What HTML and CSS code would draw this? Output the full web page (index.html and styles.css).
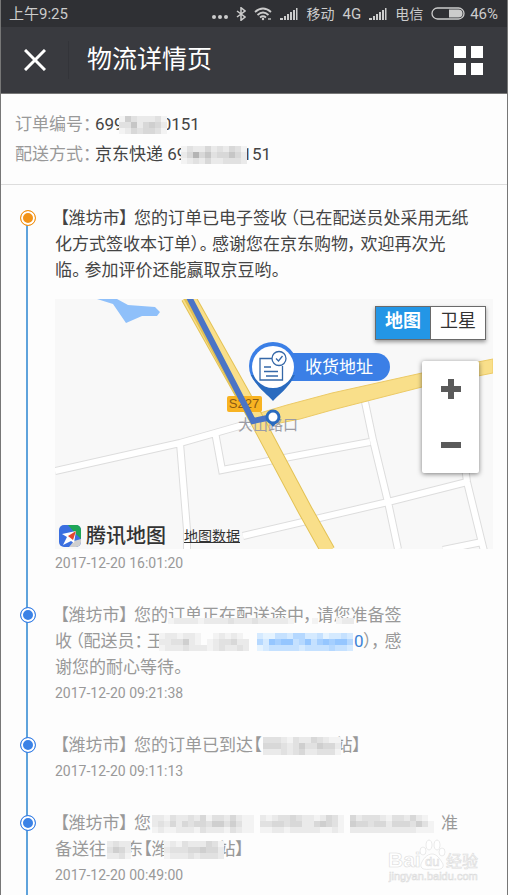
FILE: index.html
```
<!DOCTYPE html>
<html lang="zh-CN">
<head>
    <meta charset="UTF-8">
    <meta name="viewport" content="width=device-width, initial-scale=1.0">
    <title>物流详情页</title>

    <link rel="stylesheet" href="styles.css">
</head>
<body>

    <div class="statusbar">
        <span class="clock">上午9:25</span>
        <svg width="16" height="14" viewBox="0 0 16 14" fill="currentColor"><circle cx="2" cy="10" r="2"/><circle cx="8" cy="10" r="2"/><circle cx="14" cy="10" r="2"/></svg>
        <svg width="10" height="14" viewBox="0 0 10 14" fill="none" stroke="currentColor" stroke-width="1.5"><path d="M1 4l8 6-4 3.300V.7L9 4l-8 6"/></svg>
        <svg width="18" height="14" viewBox="0 0 18 14" fill="none" stroke="currentColor" stroke-width="1.800"><path d="M1 5q8-7 16 0M3.500 8q5.500-5 11 0M6 10.500q3-2.500 6 0"/><circle cx="9" cy="12" r="1.200" fill="currentColor" stroke="none"/><path d="M14 12h3" stroke-width="1.300"/></svg>
        <svg width="18" height="14" viewBox="0 0 18 14" fill="currentColor"><path d="M0 13v-2h3v2zM4 13V9h2v4zM7 13V7h2v6zM10 13V5h2v8zM13 13V3h2v10zM16 13V1h1.500v12z"/></svg>
        <span class="carrier">移动</span>
        <span>4G</span>
        <svg width="18" height="14" viewBox="0 0 18 14" fill="currentColor"><path d="M0 13v-2h3v2zM4 13V9h2v4zM7 13V7h2v6zM10 13V5h2v8zM13 13V3h2v10zM16 13V1h1.500v12z"/></svg>
        <span class="carrier">电信</span>
        <span class="battery">
            <svg width="34" height="13" viewBox="0 0 34 13"><rect x="1" y="1" width="32" height="11" rx="5.500" fill="none" stroke="currentColor" stroke-width="1.300"/><path d="M18 2.500h9.500a4 4 0 0 1 0 8H18z" fill="currentColor"/></svg>
            46%
        </span>
    </div>

    <header class="topbar">
        <button class="close" aria-label="关闭">
            <svg width="22" height="22" viewBox="0 0 22 22" stroke="#fff" stroke-width="3"><path d="M1 1l20 20M21 1L1 21"/></svg>
        </button>
        <h1>物流详情页</h1>
        <button class="menu" aria-label="菜单">
            <svg width="29" height="29" viewBox="0 0 29 29" fill="#fff"><path d="M0 0h12v12H0zM17 0h12v12H17zM0 17h12v12H0zM17 17h12v12H17z"/></svg>
        </button>
    </header>

    <main>

        <dl class="order">
            <div>
                <dt>订单编号：</dt>
                <dd>699<svg class="mosaic" data-px="15322231|33624542|12434431"></svg>0151</dd>
            </div>
            <div>
                <dt>配送方式：</dt>
                <dd>京东快递 69<svg class="mosaic" data-px="13224232431|24846344642|12324223332"></svg>151</dd>
            </div>
        </dl>

        <ol class="timeline">

            <li class="current">
                <p><span class="city">【潍坊市】</span>您的订单已电子签收<span class="open">（</span>已在配送员处采用无纸<br>化方式签收本订单）<span class="stop">。</span>感谢您在京东购物<span class="stop">，</span>欢迎再次光<br>临<span class="stop">。</span>参加评价还能赢取京豆哟。</p>

                <div class="map">
                    <svg class="scene" viewBox="0 0 438 250" preserveAspectRatio="xMidYMid slice">
                        <rect width="438" height="250" fill="#f8f8f8"/>
                        <path d="M42 0H62L73 6L100 8L105 13L102 17H87L71 24L58 5z" fill="#8fc0fa"/>

                        <!-- side streets: grey edge, then white on top -->
                        <path d="M0 172L125 144L195 124M125 144L132 231V250M160 133L167 171L245 156L315 143M310 103L318 141L333 203L343 250M188 237L333 203L412 183M409 160L412 183L427 244L430 256M388 251L427 243" fill="none" stroke="#ddd" stroke-width="8"/>
                        <path d="M0 172L125 144L195 124M125 144L132 231V250M160 133L167 171L245 156L315 143M310 103L318 141L333 203L343 250M188 237L333 203L412 183M409 160L412 183L427 244L430 256M388 251L427 243" fill="none" stroke="#fff" stroke-width="6"/>

                        <!-- main roads -->
                        <path d="M198 116L232 106L277 94L367 74L438 60V74L367 88L277 111L245 120L205 128z" fill="#f9df8a" stroke="#ecca66"/>
                        <path d="M133 -2L202 121L250 211L273 252" fill="none" stroke="#e3c255" stroke-width="15"/>
                        <path d="M133 -2L202 121L250 211L273 252" fill="none" stroke="#f9df8a" stroke-width="13"/>
                        <path d="M131 -2L196 119" fill="none" stroke="#e3c255" stroke-width="6"/>

                        <rect x="172" y="97" width="35" height="16" rx="2" fill="#f8b322"/>
                        <text x="189" y="109" class="road-no">S227</text>
                        <text x="213" y="131" class="place">大山路口</text>

                        <path d="M134 -2L198 122L217 118" fill="none" stroke="#4a74c6" stroke-width="6"/>
                        <path d="M213 122h10l-5 6z" fill="#2a6bbf"/>
                        <circle cx="218" cy="118" r="6" fill="#fff" stroke="#2a6bbf" stroke-width="3"/>

                        <!-- delivery pin -->
                        <rect x="205" y="54" width="130" height="28" rx="14" fill="#3b7fe6"/>
                        <circle cx="218" cy="67" r="24" fill="#3b7fe6"/>
                        <path d="M196 76C203 90 212 95 218 102C224 95 233 90 240 76z" fill="#2a6bbf"/>
                        <circle cx="218" cy="68" r="21" fill="#fff"/>
                        <g fill="none" stroke="#3568a8" stroke-width="1.300">
                            <path d="M217 59.500H205V81H227.500V67M209 68h7M209 72.500h14M211 77h12"/>
                            <circle cx="224" cy="59.500" r="7"/>
                            <path d="M221 59.500l2.500 2.500 4-5"/>
                        </g>
                        <text x="284" y="74" class="pin-text">收货地址</text>
                    </svg>

                    <div class="map-type">
                        <button class="on">地图</button>
                        <button>卫星</button>
                    </div>

                    <div class="map-zoom">
                        <button aria-label="放大"><svg width="20" height="20" viewBox="0 0 20 20" fill="#5a5a5a"><path d="M7 0h6v7h7v6h-7v7H7v-7H0V7h7z"/></svg></button>
                        <button aria-label="缩小"><svg width="20" height="20" viewBox="0 0 20 20" fill="#5a5a5a"><path d="M0 7h20v6H0z"/></svg></button>
                    </div>

                    <div class="map-foot">
                        <svg width="22" height="22" viewBox="0 0 22 22">
                            <rect width="22" height="22" rx="5" fill="#3b6fe0"/>
                            <path d="M9 0h8a5 5 0 0 1 5 5v9L15 7z" fill="#1fa657"/>
                            <path d="M22 14v3a5 5 0 0 1-5 5h-7l5-6z" fill="#cfcfcf"/>
                            <path d="M17 6L3 9l5 3-4 8 8-4 3 2z" fill="#fff"/>
                            <path d="M17 6l-8 5 5 4z" fill="#e2452f"/>
                        </svg>
                        <strong>腾讯地图</strong>
                        <a href="#">地图数据</a>
                    </div>
                </div>

                <time>2017-12-20 16:01:20</time>
            </li>

            <li>
                <p><span class="city">【潍坊市】</span>您的<span class="smudge">订单正在配送途中<span class="stop">，</span>请您准备<svg class="mosaic" data-px="1222212222322232222210001000122"></svg></span>签<br>收<span class="open">（</span>配送员<span class="stop">：</span>王<svg class="mosaic" data-px="12212210012121000|22335210123342200|12223222123223200"></svg><a href="tel:0"><svg class="mosaic" data-tone="blue" data-px="021133244223122320|042656634635656640|012333332333343320"></svg>0</a>）<span class="stop">，</span>感<br>谢您的耐心等待。</p>
                <time>2017-12-20 09:21:38</time>
            </li>

            <li>
                <p><span class="city">【潍坊市】</span>您的订单已到达【<svg class="mosaic" data-px="03332132243211|04443235335442|02223234223331"></svg>站】</p>
                <time>2017-12-20 09:11:13</time>
            </li>

            <li>
                <p><span class="city">【潍坊市】</span>您<svg class="mosaic" data-px="02213223241332421102123343221243104233321332421000|02324243443553531103344344224543105443442444353100|01211222132221321101122122222112102222222222211100"></svg>准<br>备送往<svg class="mosaic" data-px="02322|03542|02231"></svg>东【潍<svg class="mosaic" data-px="1213222431|2333445442|1222323332"></svg>站】</p>
                <time>2017-12-20 00:49:00</time>
            </li>

        </ol>

    </main>

    <svg class="watermark" width="94" height="46" viewBox="0 0 94 46">
        <text x="0" y="28" font-size="21" font-weight="bold">Bai</text>
        <path d="M33 25c2-5 6-10 11-10s8 5 11 10c1 5-3 6-11 5-8 1-12 0-11-5z"/>
        <ellipse cx="35" cy="12" rx="3" ry="4"/>
        <ellipse cx="41" cy="6" rx="3" ry="5"/>
        <ellipse cx="49" cy="6" rx="3" ry="5"/>
        <ellipse cx="54" cy="13" rx="3" ry="4"/>
        <text x="37" y="27" font-size="13">du</text>
        <text x="58" y="28" font-size="16">经验</text>
        <text x="1" y="41" font-size="11">jingyan.baidu.com</text>
    </svg>

    <script>

        // hidden parts of numbers and names: one digit per tile, 0 is empty
        const size = 6;

        document.querySelectorAll(".mosaic").forEach(function(svg){

            const rows = svg.dataset.px.split("|");
            svg.setAttribute("width", rows[0].length * size);
            svg.setAttribute("height", rows.length * size);

            let tiles = "";
            rows.forEach(function(row, y){
                for (let x = 0; x < row.length; x++){
                    const n = Number(row[x]);
                    if (n == 0) continue;
                    const v = 252 - n * 9;
                    const color = svg.dataset.tone == "blue" ? "rgb(" + (245 - n * 16) + "," + (252 - n * 9) + ",255)" : "rgb(" + v + "," + v + "," + v + ")";
                    tiles += '<rect x="' + x * size + '" y="' + y * size + '" width="6" height="6" fill="' + color + '"/>';
                }
            });
            svg.innerHTML = tiles;
        });

    </script>
</body>
</html>
```
FILE: styles.css
```
*{
    box-sizing: border-box;
}

body{
    margin: 0;
    min-height: 100vh;
    display: flex;
    flex-direction: column;
    position: relative;
    background: #fdfdfd;
    border-left: 1px solid #777;
    border-right: 1px solid #777;
    color: #444;
    font-family: Roboto, "Noto Sans CJK SC", sans-serif;
    font-size: 17px;
    line-height: 26px;
    font-feature-settings: "palt";
}

button{
    padding: 0;
    border: none;
    background: none;
    font: inherit;
    color: inherit;
}

svg{
    display: block;
}

h1, p, dl, dd, ol{
    margin: 0;
    padding: 0;
}

/* top */

.statusbar{
    display: flex;
    align-items: center;
    gap: 8px;
    height: 27px;
    padding: 0 9px 0 8px;
    background: #2f3034;
    color: #ccc;
    font-size: 15px;
}

.clock{
    margin-right: auto;
}

.carrier{
    font-size: 14px;
}

.battery{
    display: flex;
    align-items: center;
    gap: 5px;
}

.topbar{
    display: flex;
    align-items: center;
    height: 67px;
    padding-right: 24px;
    background: #393a3f;
    border-bottom: 1px solid #777;
    color: #fff;
}

.close{
    padding: 8px 22px 8px 23px;
    border-right: 1px solid #333439;
}

.topbar h1{
    flex: 1;
    padding-left: 18px;
    font-size: 25px;
    line-height: 36px;
    font-weight: 400;
}

/* order */

.order{
    padding: 15px 14px;
    border-bottom: 1px solid #ddd;
    line-height: 30px;
}

.order div{
    display: flex;
}

.order dt{
    width: 80px;
    color: #999;
}

/* timeline */

main{
    flex: 1;
    display: flex;
    flex-direction: column;
}

.timeline{
    flex: 1;
    display: flex;
    flex-direction: column;
    padding-top: 20px;
    list-style: none;
}

.timeline li{
    position: relative;
    padding: 0 14px 26px 54px;
    color: #999;
}

.timeline li:last-child{
    flex: 1;
    padding-bottom: 7px;
}

.timeline li.current{
    color: #444;
}

.timeline li::before{
    content: "";
    position: absolute;
    left: 25px;
    top: 0;
    bottom: 0;
    width: 2px;
    background: #5fa3dc;
}

.timeline li.current::before{
    top: 12px;
}

.timeline li::after{
    content: "";
    position: absolute;
    left: 19px;
    top: 5px;
    width: 14px;
    height: 14px;
    border: 1px solid #3b82e6;
    border-radius: 50%;
    background: #3b82e6;
    box-shadow: inset 0 0 0 2px #fff;
}

.timeline li.current::after{
    border-color: #f29318;
    background: #f29318;
}

.timeline p{
    white-space: nowrap;
}

.city{
    padding: 0 6px 0 5px;
}

.open{
    padding-left: 3px;
}

.stop{
    padding-right: 4px;
}

.timeline time{
    display: block;
    color: #999;
    font-size: 14px;
}

.timeline a{
    color: #3b82d6;
    text-decoration: none;
}

.mosaic{
    display: inline-block;
    position: relative;
    margin: 0 -5px;
    vertical-align: -4px;
}

.smudge{
    position: relative;
}

.smudge .mosaic{
    position: absolute;
    left: 0;
    bottom: 1px;
    margin: 0;
}

/* map */

.map{
    position: relative;
    height: 250px;
    margin-top: 16px;
    margin-bottom: 1px;
}

.scene{
    width: 100%;
    height: 100%;
}

.scene text{
    text-anchor: middle;
}

.road-no{
    font-size: 13px;
    font-family: "Liberation Sans", sans-serif;
    fill: #8a5a14;
}

.place{
    font-size: 15px;
    fill: #9c9ca4;
}

.pin-text{
    font-size: 17px;
    fill: #fff;
}

.map-type{
    position: absolute;
    top: 7px;
    right: 7px;
    display: flex;
    border: 1px solid #6a6a6a;
    background: #fff;
    color: #333;
    box-shadow: 0 2px 4px rgba(0, 0, 0, 0.4);
}

.map-type button{
    width: 54px;
    height: 32px;
    padding-bottom: 4px;
    font-size: 18px;
}

.map-type .on{
    width: 55px;
    background: #2396e6;
    border-right: 1px solid #6a6a6a;
    color: #fff;
    font-weight: bold;
}

.map-zoom{
    position: absolute;
    top: 62px;
    right: 14px;
    display: flex;
    flex-direction: column;
    background: #fff;
    border-radius: 2px;
    box-shadow: 0 1px 5px rgba(0, 0, 0, 0.5);
}

.map-zoom button{
    display: flex;
    align-items: center;
    justify-content: center;
    width: 57px;
    height: 56px;
}

.map-foot{
    position: absolute;
    left: 4px;
    bottom: 0;
    display: flex;
    align-items: center;
    gap: 5px;
}

.map-foot strong{
    color: #333;
    font-size: 20px;
    font-weight: 500;
}

.map-foot a{
    margin-left: 13px;
    color: #333;
    font-size: 14px;
    text-decoration: underline;
}

/* corner mark */

.watermark{
    position: absolute;
    right: 25px;
    bottom: 10px;
    fill: #fff;
    stroke: #dcdcdc;
    stroke-width: 0.6;
    font-family: "Liberation Sans", "Noto Sans CJK SC", sans-serif;
}
```
